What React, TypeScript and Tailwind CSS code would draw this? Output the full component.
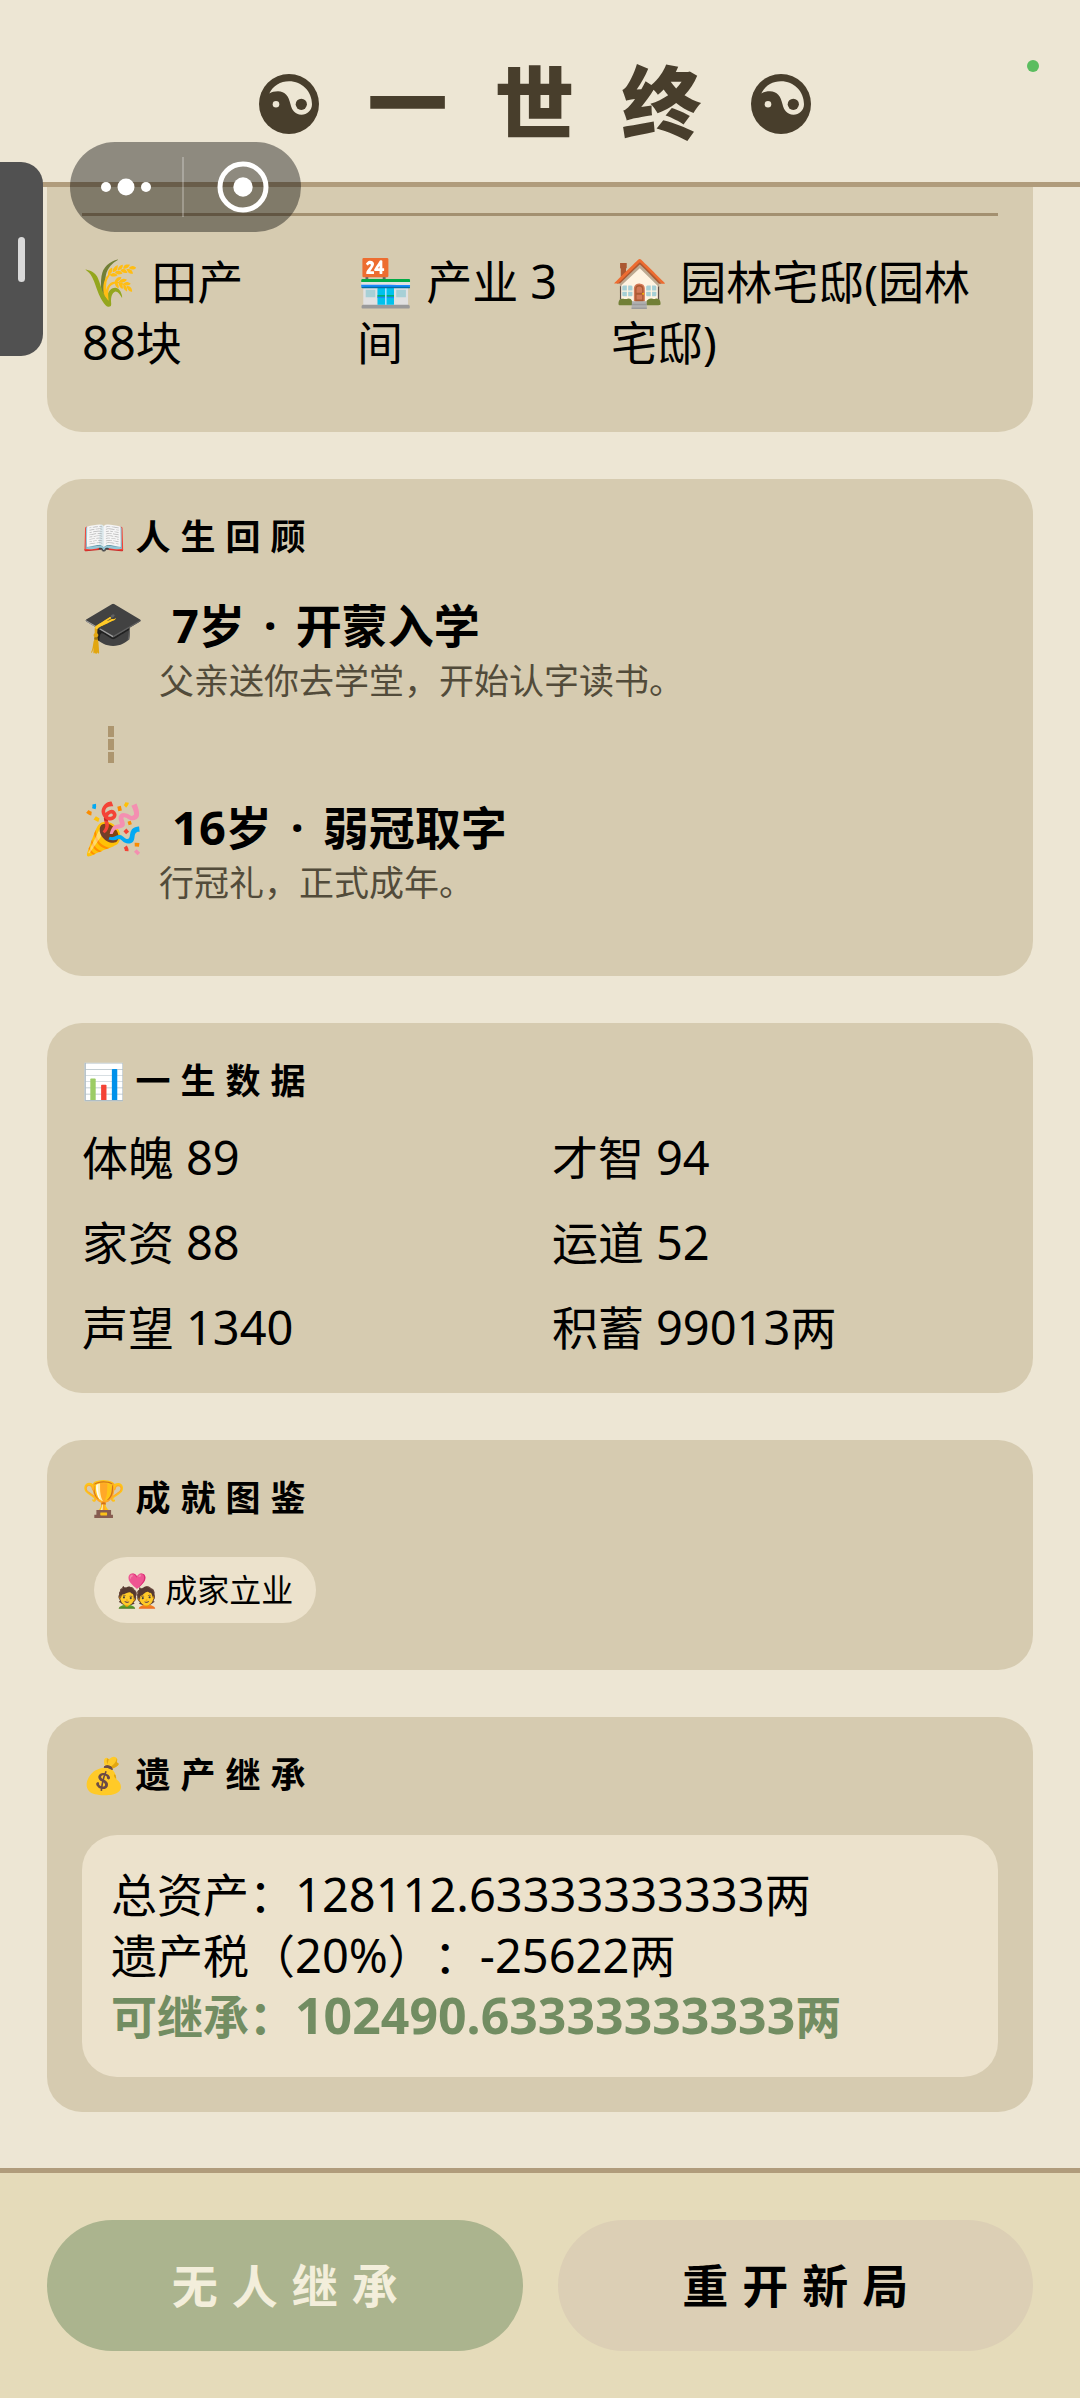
import type { ReactNode } from "react";

function YinYang() {
  return (
    <svg viewBox="0 0 60 60" className="mt-[4px] size-[60px]" role="img" aria-label="☯">
      <circle cx="30" cy="30" r="30" fill="#483e2c" />
      <path
        d="M10.3 19.5 C14 11.7 21.5 7.3 30 7.3 C43 7.3 53 17.5 53 30.3 C53 36.5 48 40.7 42.5 40.7 C36 40.7 32.7 36 31.5 30.3 C29.8 22 26 17.2 19 17.2 C15.5 17.2 12.5 18 10.3 19.5 Z"
        fill="#ede6d4"
      />
      <circle cx="42.3" cy="30.3" r="5.6" fill="#483e2c" />
      <circle cx="17" cy="30.3" r="3.3" fill="#ede6d4" />
    </svg>
  );
}

function Num({ children }: { children: ReactNode }) {
  return <span className="text-[47px] leading-none">{children}</span>;
}

function Card({ icon, title, children }: { icon: string; title: string; children: ReactNode }) {
  return (
    <section className="rounded-[35px] bg-[#d6cbb0] p-[35px]">
      <h2 className="text-[35px] leading-[46px] font-bold tracking-[10px]">
        {icon}
        {title}
      </h2>
      {children}
    </section>
  );
}

function LifeEvent({ icon, age, title, text }: { icon: string; age: number; title: string; text: string }) {
  return (
    <li>
      <div className="flex gap-[28px] leading-[61px]">
        <span className="w-[62px] text-[50px] whitespace-nowrap">{icon}</span>
        <h3 className="font-bold">
          <Num>{age}</Num>岁 <span className="mx-[7px]">·</span> {title}
        </h3>
      </div>
      <p className="mt-[2px] pl-[77px] text-[35px] leading-[46px] text-[#524b3a]">{text}</p>
    </li>
  );
}

const stats: [string, string, string][] = [
  ["体魄", "89", ""],
  ["才智", "94", ""],
  ["家资", "88", ""],
  ["运道", "52", ""],
  ["声望", "1340", ""],
  ["积蓄", "99013", "两"],
];

export default function App() {
  return (
    <div
      lang="zh-CN"
      className="relative flex min-h-screen flex-col bg-[#ede6d4] font-['Noto_Sans','Noto_Sans_CJK_SC','Noto_Color_Emoji',sans-serif] text-[46px] leading-[61px] text-black"
    >
      <header className="flex justify-center border-b-[5px] border-[#b09c7c] pt-[42px] pr-[11px] pb-[20px]">
        <div className="flex items-center gap-[49px] text-[#483e2c]">
          <YinYang />
          <h1 className="flex gap-[47px] text-[80px] leading-[120px] font-black">
            <span>一</span>
            <span>世</span>
            <span>终</span>
          </h1>
          <YinYang />
        </div>
      </header>

      <main className="flex grow flex-col gap-[47px] px-[47px] pb-[56px]">
        <section className="rounded-b-[35px] bg-[#d6cbb0] px-[35px] pt-[26px] pb-[59px]">
          <ul className="grid grid-cols-[225fr_204fr_387fr] gap-x-[50px] border-t-[3px] border-[#a39070] pt-[35px]">
            <li>
              🌾 田产{" "}
              <span className="inline-block whitespace-nowrap">
                <Num>88</Num>块
              </span>
            </li>
            <li>
              🏪 产业 <Num>3</Num>间
            </li>
            <li>🏠 园林宅邸(园林宅邸)</li>
          </ul>
        </section>

        <Card icon="📖" title="人生回顾">
          <ul className="pt-[35px] pb-[35px]">
            <LifeEvent icon="🎓" age={7} title="开蒙入学" text="父亲送你去学堂，开始认字读书。" />
            <li aria-hidden="true" className="mt-[22px] mb-[34px] ml-[26px] flex flex-col gap-[2px]">
              <span className="h-[11px] w-[6px] bg-[#ad966f]" />
              <span className="h-[11px] w-[6px] bg-[#ad966f]" />
              <span className="h-[11px] w-[6px] bg-[#ad966f]" />
            </li>
            <LifeEvent icon="🎉" age={16} title="弱冠取字" text="行冠礼，正式成年。" />
          </ul>
        </Card>

        <Card icon="📊" title="一生数据">
          <ul className="mt-[23px] grid grid-cols-2 gap-x-[24px] gap-y-[24px]">
            {stats.map(([label, value, unit]) => (
              <li key={label}>
                {label} <Num>{value}</Num>
                {unit}
              </li>
            ))}
          </ul>
        </Card>

        <Card icon="🏆" title="成就图鉴">
          <ul className="flex px-[12px] pt-[36px] pb-[12px]">
            <li className="rounded-full bg-[#ece2cc] px-[23px] py-[10px] text-[32px] leading-[46px]">💑 成家立业</li>
          </ul>
        </Card>

        <Card icon="💰" title="遗产继承">
          <div className="mt-[37px] rounded-[35px] bg-[#ece2cc] px-[29px] pt-[29px] pb-[30px] [text-spacing-trim:space-all]">
            <p>
              总资产：<Num>128112.63333333333</Num>两
            </p>
            <p>
              遗产税（<Num>20%</Num>）：<Num>-25622</Num>两
            </p>
            <p className="font-bold text-[#728d62]">
              可继承：<span className="text-[50px] leading-none">102490.63333333333</span>两
            </p>
          </div>
        </Card>
      </main>

      <footer className="grid grid-cols-2 gap-[35px] border-t-[5px] border-[#b09c7c] bg-[#e5dbba] p-[47px]">
        <button
          type="button"
          disabled
          className="rounded-full bg-[#abb48e] py-[35px] pl-[14px] font-bold tracking-[14px] text-[#f3eedb]"
        >
          无人继承
        </button>
        <button type="button" className="rounded-full bg-[#dccfb5] py-[35px] pl-[14px] font-bold tracking-[14px]">
          重开新局
        </button>
      </footer>

      <span className="absolute top-[60px] right-[41px] size-[12px] rounded-full bg-[#5bbd5f]" />

      <div className="absolute top-[162px] left-0 flex h-[194px] w-[43px] items-center justify-end rounded-r-[22px] bg-[#515151] pr-[18px]">
        <span className="h-[45px] w-[7px] rounded-full bg-[#d9d9d9]" />
      </div>

      <div className="absolute top-[142px] left-[70px] flex h-[90px] w-[231px] items-center rounded-full bg-black/40">
        <button type="button" aria-label="更多" className="flex h-full w-[112px] items-center justify-center">
          <svg viewBox="0 0 50 18" className="h-[18px] w-[50px]" fill="#fff">
            <circle cx="5" cy="9" r="5" />
            <circle cx="25" cy="9" r="8.5" />
            <circle cx="45" cy="9" r="5" />
          </svg>
        </button>
        <span className="h-[60px] w-[2px] bg-white/25" />
        <button type="button" aria-label="关闭" className="flex h-full flex-1 items-center justify-center">
          <svg viewBox="0 0 52 52" className="size-[52px]">
            <circle cx="26" cy="26" r="23" fill="none" stroke="#fff" strokeWidth="5" />
            <circle cx="26" cy="26" r="9.7" fill="#fff" />
          </svg>
        </button>
      </div>
    </div>
  );
}
